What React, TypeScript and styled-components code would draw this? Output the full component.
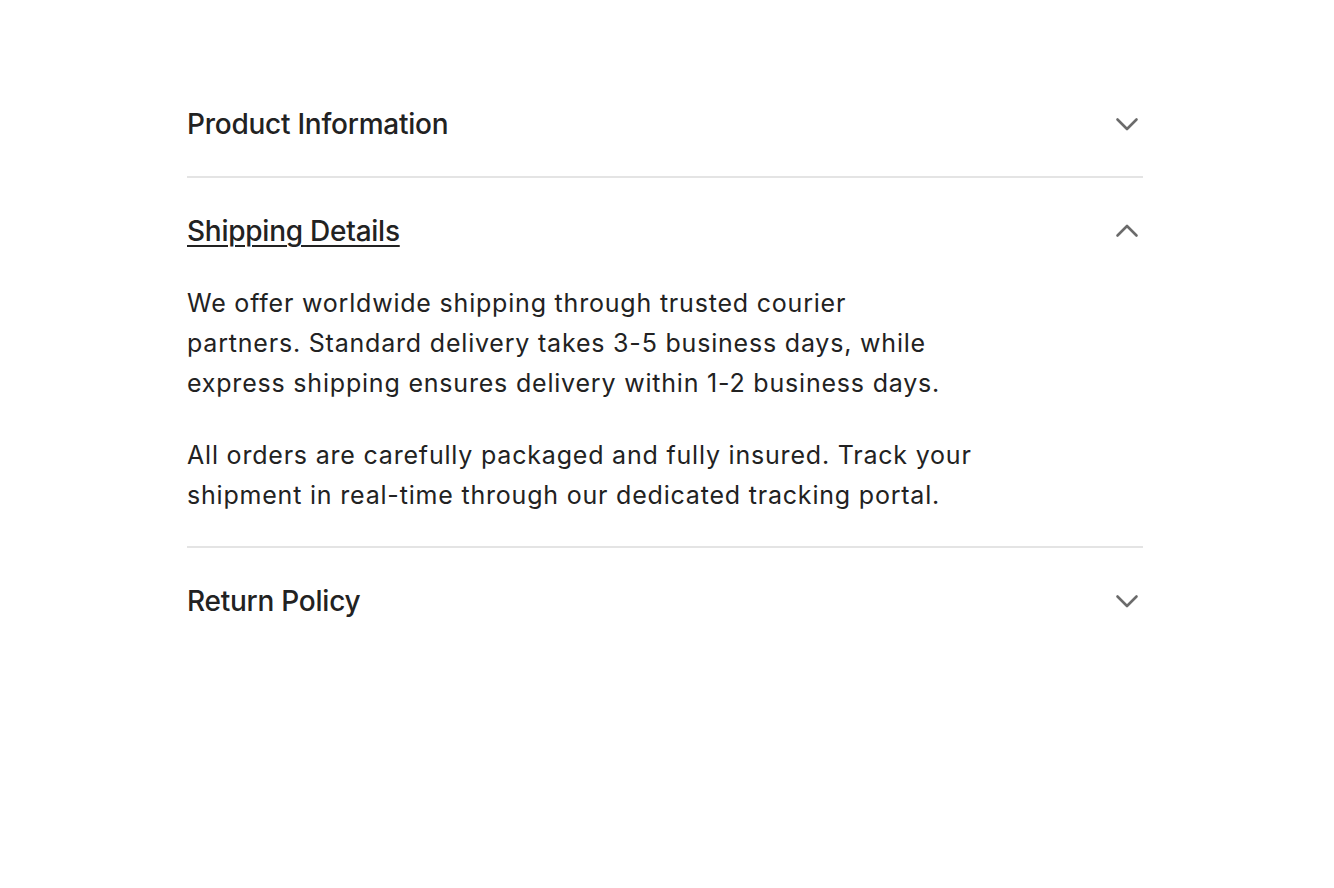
import React, { useState } from "react";
import styled, { createGlobalStyle } from "styled-components";

const Global = createGlobalStyle`
  html, body { margin: 0; padding: 0; background: #fff; }
  body { font-family: Inter, "Noto Sans", sans-serif; color: #222; }
`;

const Page = styled.div`
  padding: 71px 191px 0 187px;
`;

const List = styled.div`
  display: flex;
  flex-direction: column;
`;

const Item = styled.section<{ $last?: boolean }>`
  border-bottom: ${(p) => (p.$last ? "none" : "2px solid #e4e4e4")};
`;

const Header = styled.button`
  all: unset;
  box-sizing: border-box;
  width: 100%;
  display: flex;
  align-items: center;
  justify-content: space-between;
  padding: 36px 0 35px;
  cursor: pointer;
`;

const Title = styled.span<{ $active?: boolean }>`
  font-size: 28px;
  line-height: 34px;
  font-weight: 500;
  color: #222;
  letter-spacing: -0.25px;
  text-decoration: ${(p) => (p.$active ? "underline" : "none")};
  text-decoration-thickness: 2px;
  text-underline-offset: 4px;
`;

const Chevron = styled.svg`
  width: 24px;
  height: 24px;
  margin-right: 4px;
  flex: none;
`;

const Body = styled.div`
  max-width: 800px;
  padding-bottom: 31px;
  display: flex;
  flex-direction: column;
  gap: 32px;
`;

const Para = styled.p`
  margin: 0;
  font-size: 25px;
  line-height: 40px;
  letter-spacing: 0.8px;
  color: #222;
`;

const Icon = ({ up }: { up?: boolean }) => (
  <Chevron viewBox="0 0 24 24" fill="none">
    <polyline
      points={up ? "2.5,16.5 12,7 21.5,16.5" : "2.5,7.5 12,17 21.5,7.5"}
      stroke="#6b6b6b"
      strokeWidth="2.6"
      strokeLinecap="round"
      strokeLinejoin="round"
    />
  </Chevron>
);

const items = [
  { title: "Product Information", body: [] as string[][] },
  {
    title: "Shipping Details",
    body: [
      [
        "We offer worldwide shipping through trusted courier",
        "partners. Standard delivery takes 3-5 business days, while",
        "express shipping ensures delivery within 1-2 business days.",
      ],
      [
        "All orders are carefully packaged and fully insured. Track your",
        "shipment in real-time through our dedicated tracking portal.",
      ],
    ],
  },
  { title: "Return Policy", body: [] as string[][] },
];

export default function App() {
  const [open, setOpen] = useState(1);
  return (
    <Page>
      <Global />
      <List>
        {items.map((it, i) => (
          <Item key={it.title} $last={i === items.length - 1}>
            <Header onClick={() => setOpen(open === i ? -1 : i)}>
              <Title $active={open === i}>{it.title}</Title>
              <Icon up={open === i} />
            </Header>
            {open === i && (
              <Body>
                {it.body.map((lines, pi) => (
                  <Para key={pi}>
                    {lines.map((l, li) => (
                      <React.Fragment key={li}>
                        {li > 0 && <br />}
                        {l}
                      </React.Fragment>
                    ))}
                  </Para>
                ))}
              </Body>
            )}
          </Item>
        ))}
      </List>
    </Page>
  );
}
